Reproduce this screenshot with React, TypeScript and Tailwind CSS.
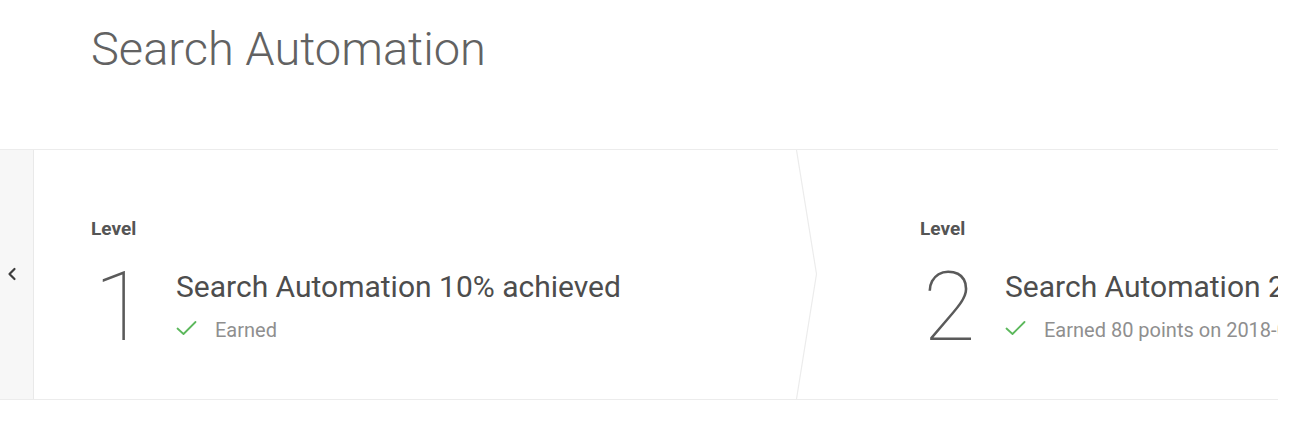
import React from 'react';

interface Level {
  level: number;
  title: string;
  status: string;
}

const levels: Level[] = [
  { level: 1, title: 'Search Automation 10% achieved', status: 'Earned' },
  { level: 2, title: 'Search Automation 20% achieved', status: 'Earned 80 points on 2018-05-14' },
];

const Check = () => (
  <svg width="21" height="16" viewBox="0 0 21 16" fill="none" className="shrink-0 mb-[4px]">
    <path d="M1.5 8.5 L7.5 14 L19.5 2" stroke="#5cb85c" strokeWidth="1.8" strokeLinecap="round" strokeLinejoin="round" />
  </svg>
);

const LevelCard: React.FC<{ item: Level; padLeft: string }> = ({ item, padLeft }) => (
  <div className={`flex flex-col h-full pt-[69px] ${padLeft}`}>
    <span className="text-[19px] font-bold leading-[19px] text-[#555]">Level</span>
    <div className="flex items-start mt-[34px]">
      <span className="w-[85px] shrink-0 text-[96px] font-thin leading-[70px] text-[#5a5a5a] pl-[3px]">
        {item.level}
      </span>
      <div className="flex flex-col">
        <span className="text-[30px] leading-[30px] text-[#4d4d4d] whitespace-nowrap">{item.title}</span>
        <div className="flex items-center gap-[18px] mt-[18px]">
          <Check />
          <span className="text-[20px] leading-[20px] text-[#8f8f8f] whitespace-nowrap">{item.status}</span>
        </div>
      </div>
    </div>
  </div>
);

export default function App() {
  return (
    <div className="w-[1308px] h-[446px] bg-white overflow-hidden font-['Roboto',sans-serif]">
      <div className="pl-[91px] pt-[23px] h-[149px]">
        <h1 className="text-[47px] font-light leading-[52px] text-[#626262]">Search Automation</h1>
      </div>
      <div className="w-[1278px] h-[251px] flex border-y border-[#ececec] overflow-hidden">
        <div className="w-[34px] shrink-0 bg-[#f7f7f7] border-r border-[#e9e9e9] flex items-center pl-[7px] pb-[1px]">
          <svg width="10" height="14" viewBox="0 0 10 14" fill="none">
            <path d="M7.5 2 L2.5 7 L7.5 12" stroke="#3d3d3d" strokeWidth="2.2" strokeLinecap="round" strokeLinejoin="round" />
          </svg>
        </div>
        <div className="relative w-[763px] shrink-0">
          <LevelCard item={levels[0]} padLeft="pl-[57px]" />
          <svg className="absolute top-0 right-[-21px]" width="22" height="249" viewBox="0 0 22 249" fill="none">
            <path d="M0.5 0 L20.5 124 L0.5 249" stroke="#ececec" strokeWidth="1.2" />
          </svg>
        </div>
        <div className="w-[764px] shrink-0">
          <LevelCard item={levels[1]} padLeft="pl-[123px]" />
        </div>
      </div>
    </div>
  );
}
